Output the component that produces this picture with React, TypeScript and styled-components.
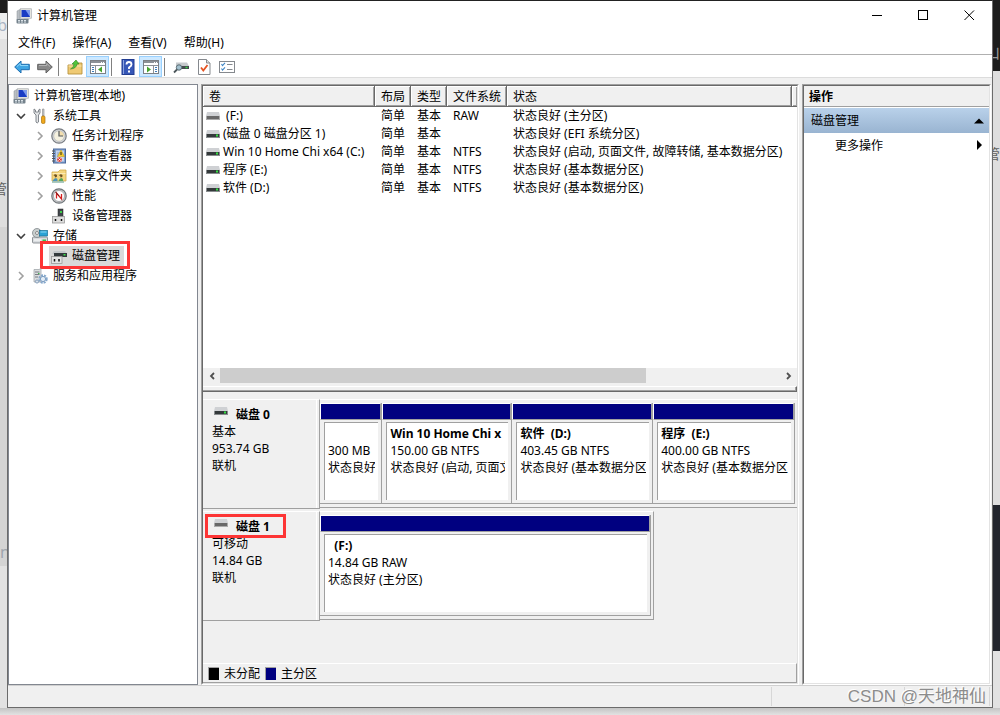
import React from "react";
import styled, { createGlobalStyle, css } from "styled-components";

const face = "#f0f0f0";
const shade = "#a0a0a0";
const dark = "#696969";
const navy = "#000080";

const GlobalStyle = createGlobalStyle`
  * { box-sizing: border-box; }
  body {
    margin: 0;
    background: #e2e2e2;
    color: #000;
    font-family: "Noto Sans", "Noto Sans CJK SC", sans-serif;
    font-size: 12px;
    line-height: 17px;
  }
  button {
    font: inherit;
    color: inherit;
    background: none;
    border: 0;
    padding: 0;
    cursor: default;
  }
  svg { display: block; flex: none; }
`;

/* ---------- desktop around the window ---------- */

const Desktop = styled.div`
  min-height: 100vh;
  display: flex;
  flex-direction: column;
`;

const DesktopRow = styled.div`
  flex: 1;
  display: flex;
`;

const Gutter = styled.div`
  flex: 0 0 7px;
  overflow: hidden;
`;

const Backdrop = styled.div<{ $h: number; $bg: string; $ink?: string; $top?: number; $end?: boolean; $size?: number }>`
  width: 7px;
  height: ${(p) => p.$h}px;
  padding-top: ${(p) => p.$top ?? 0}px;
  background: ${(p) => p.$bg};
  color: ${(p) => p.$ink ?? "#555"};
  font-size: ${(p) => p.$size ?? 16}px;
  display: flex;
  justify-content: ${(p) => (p.$end ? "flex-end" : "flex-start")};
  overflow: hidden;
  white-space: nowrap;
`;

const BottomEdge = styled.div`
  height: 7px;
  background: linear-gradient(#c4c4c4, #e2e2e2);
`;

/* ---------- window frame ---------- */

const Window = styled.main`
  position: relative;
  flex: 1;
  min-width: 0;
  display: flex;
  flex-direction: column;
  background: ${face};
  border: 1px solid #6b6b6b;
  border-top-color: #222;
`;

const TitleBar = styled.header`
  height: 29px;
  display: flex;
  align-items: center;
  padding-left: 8px;
  background: #fff;
`;

const Title = styled.h1`
  flex: 1;
  margin: 0;
  padding-left: 5px;
  font-size: 12px;
  font-weight: 400;
`;

const CaptionButton = styled.button`
  width: 46px;
  height: 29px;
  display: flex;
  align-items: center;
  justify-content: center;
`;

const MenuBar = styled.nav`
  height: 25px;
  display: flex;
  align-items: center;
  gap: 1px;
  padding-left: 2px;
  background: #fff;
  border-bottom: 1px solid #b0b0b0;
`;

const MenuItem = styled.button`
  height: 24px;
  padding: 0 8px;
`;

const Toolbar = styled.div`
  height: 23px;
  display: flex;
  align-items: flex-end;
  padding-left: 2px;
  background: #fff;
  border-bottom: 1px solid #dcdcdc;
`;

const ToolButton = styled.button<{ $on?: boolean }>`
  width: 23px;
  height: 21px;
  display: flex;
  align-items: center;
  justify-content: center;
  padding-top: 1px;
  border: 1px solid transparent;
  ${(p) => p.$on && css`
    background: #cce8ff;
    border-color: #99d1ff;
  `}
`;

const ToolDivider = styled.span`
  width: 1px;
  height: 18px;
  margin: 0 4px 1px 2px;
  background: #808080;
`;

const Panes = styled.div`
  flex: 1;
  display: flex;
  gap: 3px;
  padding: 6px 1px 0 0;
`;

/* ---------- sunken panes ---------- */

const SunkenOuter = styled.section<{ $w?: number }>`
  flex: ${(p) => (p.$w ? `0 0 ${p.$w}px` : "1")};
  min-width: 0;
  display: flex;
  border: 1px solid ${shade};
  border-right-color: #fff;
  border-bottom-color: #fff;
`;

const SunkenInner = styled.div`
  flex: 1;
  min-width: 0;
  display: flex;
  flex-direction: column;
  border: 1px solid ${dark};
  border-right-color: #e3e3e3;
  border-bottom-color: #e3e3e3;
`;

/* ---------- console tree ---------- */

const TreePane = styled.nav`
  flex: 0 0 190px;
  padding-top: 1px;
  background: #fff;
  border: 1px solid #828790;
`;

const TreeList = styled.ul`
  margin: 0;
  padding: 0;
  list-style: none;
`;

const TreeRow = styled.li<{ $level: number }>`
  height: 20px;
  display: flex;
  padding-left: ${(p) => 2 + 19 * Math.max(0, p.$level - 1)}px;
`;

const Expander = styled.span`
  width: 19px;
  display: flex;
  align-items: center;
  justify-content: center;
`;

const TreeItem = styled.button<{ $selected?: boolean }>`
  position: relative;
  display: flex;
  align-items: center;
  gap: 5px;
  padding: 0 4px 0 2px;
  background: ${(p) => (p.$selected ? "#d9d9d9" : "transparent")};
`;

const TreeText = styled.span`
  padding-bottom: 2px;
`;

const Marker = styled.span<{ $inset: string }>`
  position: absolute;
  inset: ${(p) => p.$inset};
  border: 3px solid #fd3535;
  pointer-events: none;
`;

/* ---------- volume list ---------- */

const ListArea = styled.div`
  flex: 1 1 282px;
  overflow: hidden;
  background: #fff;
`;

const VolumeTable = styled.table`
  width: 100%;
  table-layout: fixed;
  border-collapse: separate;
  border-spacing: 0;
`;

const HeadCell = styled.th`
  height: 21px;
  padding: 0 0 0 6px;
  text-align: left;
  font-weight: 400;
  white-space: nowrap;
  overflow: hidden;
  background: ${face};
  border-right: 1px solid ${dark};
  border-bottom: 1px solid ${dark};
  box-shadow: inset 1px 1px #fff, inset -1px -1px ${shade};
  &:last-child { border-right: 0; padding: 0; }
`;

const Cell = styled.td`
  height: 18px;
  padding: 0 0 0 6px;
  line-height: 18px;
  vertical-align: top;
  white-space: nowrap;
  overflow: hidden;
`;

const VolumeName = styled.div`
  display: flex;
  align-items: center;
  gap: 3px;
  margin-left: -3px;
  white-space: pre;
`;

const ScrollBar = styled.div`
  height: 15px;
  display: flex;
  background: ${face};
`;

const ScrollButton = styled.button`
  width: 17px;
  display: flex;
  align-items: center;
  justify-content: center;
`;

const ScrollTrack = styled.div`
  flex: 1;
`;

const ScrollThumb = styled.div`
  width: 76%;
  height: 15px;
  background: #cdcdcd;
`;

const Splitter = styled.div`
  height: 6px;
  margin-top: 3px;
  background: ${face};
  border: 1px solid ${dark};
  border-top-color: #fff;
  border-left: 0;
  box-shadow: inset -1px -1px ${shade};
`;

/* ---------- disk map ---------- */

const DiskMap = styled.div`
  flex: 1 1 271px;
  display: flex;
  flex-direction: column;
  gap: 2px;
  padding-top: 7px;
`;

const DiskRow = styled.article`
  height: 110px;
  display: flex;
`;

const DiskLabel = styled.div`
  flex: 0 0 117px;
  padding: 6px 0 0 9px;
  border-top: 1px solid #fff;
  border-right: 1px solid ${shade};
  border-bottom: 1px solid ${shade};
  box-shadow: inset -2px 0 ${face}, inset -3px 0 #fff;
`;

const DiskTitle = styled.h2`
  position: relative;
  margin: 0;
  display: flex;
  gap: 8px;
  padding-left: 2px;
  font-size: 12px;
  line-height: 17px;
  font-weight: 700;
  svg { margin-top: 1px; }
`;

const Line = styled.div`
  height: 17px;
  white-space: pre;
  overflow: hidden;
`;

const BoldLine = styled(Line)`
  font-weight: 700;
`;

const Partitions = styled.div<{ $share: number; $closed?: boolean }>`
  width: ${(p) => p.$share}%;
  height: 109px;
  display: flex;
  padding: 3px 2px 3px 0;
  border-top: 1px solid #fff;
  border-bottom: 1px solid ${shade};
  border-right: ${(p) => (p.$closed ? `1px solid ${shade}` : "0")};
`;

const DiskGraph = styled.div`
  flex: 1;
  min-width: 0;
`;

const Partition = styled.div<{ $grow: number }>`
  flex: ${(p) => p.$grow} 1 0;
  min-width: 0;
  display: flex;
  flex-direction: column;
  border-right: 1px solid ${shade};
  border-bottom: 1px solid ${shade};
`;

const PartitionBar = styled.div`
  height: 17px;
  background: ${navy};
  border: 1px solid #fff;
  border-right-color: ${shade};
  border-bottom-color: ${shade};
`;

const PartitionBody = styled.div`
  flex: 1;
  margin: 2px 3px 3px 4px;
  padding: 2px 3px 0 3px;
  background: #fff;
  border-top: 1px solid ${shade};
  border-left: 1px solid ${shade};
  overflow: hidden;
`;

const Legend = styled.div`
  height: 20px;
  display: flex;
  align-items: center;
  gap: 5px;
  padding-left: 5px;
  border-top: 1px solid #fff;
  border-right: 1px solid ${shade};
  border-bottom: 1px solid ${shade};
`;

const Swatch = styled.span<{ $color: string }>`
  width: 11px;
  height: 13px;
  background: ${(p) => p.$color};
  border-top: 1px solid ${shade};
  border-left: 1px solid ${shade};
`;

/* ---------- actions pane ---------- */

const ActionsHeading = styled.h2`
  height: 21px;
  margin: 0;
  padding-left: 5px;
  font-size: 12px;
  line-height: 21px;
  font-weight: 700;
  background: ${face};
  border-bottom: 1px solid ${shade};
`;

const ActionsBody = styled.div`
  flex: 1;
  padding-top: 1px;
  background: #fff;
`;

const ActionRow = styled.button<{ $group?: boolean }>`
  width: 100%;
  height: ${(p) => (p.$group ? 25 : 24)}px;
  display: flex;
  align-items: center;
  justify-content: space-between;
  padding: 0 5px 0 ${(p) => (p.$group ? 7 : 31)}px;
  background: ${(p) => (p.$group ? "linear-gradient(#b9d1ea, #99b4d1)" : "none")};
`;

/* ---------- status bar ---------- */

const StatusBar = styled.footer`
  height: 22px;
  display: flex;
  justify-content: flex-end;
  padding: 1px 2px 1px 0;
  border-top: 1px solid #d0d0d0;
`;

const StatusCell = styled.div<{ $w: number }>`
  width: ${(p) => p.$w}px;
  border-right: 1px solid #d7d7d7;
`;

const Watermark = styled.div`
  position: absolute;
  right: 6px;
  bottom: 0;
  font-family: "Liberation Sans", "Noto Sans CJK SC", sans-serif;
  font-size: 17px;
  line-height: 20px;
  color: #8c8c8c;
  text-shadow: -1px -1px #fff;
  white-space: nowrap;
`;

/* ---------- icons ---------- */

const Svg = ({ children, w = 16, h = 16 }: { children: React.ReactNode; w?: number; h?: number }) => (
  <svg width={w} height={h} viewBox={`0 0 ${w} ${h}`} aria-hidden="true">{children}</svg>
);

const ComputerIcon = () => (
  <Svg>
    <path d="M1 3 L4 1.500 V12 H1 Z" fill="#b9bec4" stroke="#8b9096" strokeWidth=".5" />
    <rect x="4.300" y=".8" width="11" height="9.400" fill="#e8e8e2" stroke="#a3a7ab" strokeWidth=".7" />
    <rect x="5.500" y="2" width="8.500" height="7" fill="#1a3cc4" />
    <path d="M9.500 2 H14 V9 Z" fill="#7d9aec" />
    <path d="M8 10.200 H12.500 L13.500 12 H7 Z" fill="#b6babd" />
    <rect x=".5" y="11" width="12" height="4.500" rx="1" fill="#74828c" />
    <path d="M2 12.500 H11 M2 14 H11" stroke="#dbe3e8" strokeDasharray="2 1" />
  </Svg>
);

const ToolsIcon = () => (
  <Svg>
    <path d="M2 1 L2 5 L4 7 V14 Q5 16 6.500 14 V7 L8 5 V1 L6.500 2 V4 H3.500 V2 Z" fill="#e2e4e6" stroke="#777d83" strokeWidth=".9" />
    <path d="M10.500 1 H12 V8 H10.500 Z" fill="#c9ccd0" stroke="#888" strokeWidth=".6" />
    <rect x="9.500" y="8" width="3.500" height="7.500" rx="1.300" fill="#f0a81d" stroke="#a87410" strokeWidth=".7" />
  </Svg>
);

const ClockIcon = () => (
  <Svg>
    <circle cx="8" cy="8" r="7.200" fill="#d4d7da" stroke="#777b80" strokeWidth="1.200" />
    <circle cx="8" cy="8" r="5.300" fill="#f5f1df" stroke="#b4b6b8" strokeWidth=".7" />
    <path d="M8 8 V3 A5 5 0 0 1 13 8 Z" fill="#f2d79a" opacity=".7" />
    <path d="M8 3 V8 H12" fill="none" stroke="#50565c" strokeWidth="1.200" />
  </Svg>
);

const EventIcon = () => (
  <Svg>
    <rect x="2.500" y="1" width="12" height="14" fill="#7f9fd0" stroke="#4c6a9c" />
    <rect x="5" y="2.500" width="8" height="11" fill="#c3d3ec" />
    <path d="M6 5 H9 M6 7 H8 M6 9 H7" stroke="#6d88b4" strokeWidth=".7" />
    <path d="M1 3 H4 M1 5.500 H4 M1 8 H4 M1 10.500 H4 M1 13 H4" stroke="#555" />
    <path d="M10 2 L13.500 8.500 H6.500 Z" fill="#f6cb29" stroke="#c09a10" strokeWidth=".5" />
    <path d="M10 4 V7" stroke="#222" />
    <circle cx="8.500" cy="11.500" r="2.600" fill="#d8342c" stroke="#fff" strokeWidth=".5" />
    <path d="M7.300 10.300 L9.700 12.700 M9.700 10.300 L7.300 12.700" stroke="#fff" strokeWidth=".8" />
  </Svg>
);

const SharedFolderIcon = () => (
  <Svg>
    <path d="M1 4 H7 L9 2 H15 V13 H1 Z" fill="#f5d57e" stroke="#cfa94a" strokeWidth=".8" />
    <path d="M1.500 5.500 H14.500" stroke="#fbeab4" />
    <path d="M2.500 7.500 Q4 5.500 6 7 Q6.500 9 4.500 9.500 Q3 9 4 8" fill="#6c5124" />
    <path d="M1.500 13 Q3 10 5 10 Q7 10.500 6.500 13 Z" fill="#4d93b8" />
    <path d="M8 7.500 Q9.500 5.500 11.500 7 Q12 9 10 9.500 Q8.500 9 9.500 8" fill="#6c5124" />
    <path d="M7.500 13 Q8.500 10 10.500 10 Q12.500 10.500 12 13 Z" fill="#57a55d" />
    <path d="M1 14 H13" stroke="#8fb9ac" strokeWidth="1.500" />
  </Svg>
);

const PerformanceIcon = () => (
  <Svg>
    <circle cx="8" cy="8" r="7.200" fill="#c9ccce" stroke="#6f7478" strokeWidth="1.200" />
    <circle cx="8" cy="8" r="5.500" fill="#fff" stroke="#8b8f92" strokeWidth=".7" />
    <path d="M5.500 10.500 V5 L10.500 11 V6" fill="none" stroke="#d42020" strokeWidth="1.300" />
    <path d="M4.500 4 L8 8" stroke="#701818" />
  </Svg>
);

const DeviceIcon = () => (
  <Svg>
    <rect x="7" y="1" width="5" height="9" fill="#42474b" stroke="#222" strokeWidth=".5" />
    <rect x="9" y="3" width="2" height="2" fill="#3fd34a" />
    <rect x="1.500" y="8.500" width="12" height="6.500" fill="#dedede" stroke="#999" strokeWidth=".8" />
    <path d="M4.500 11 V13 M10.500 11 V13" stroke="#111" strokeWidth="1.500" />
  </Svg>
);

const StorageIcon = () => (
  <Svg>
    <rect x=".5" y="9" width="15" height="6" rx="1" fill="#d9dcdf" stroke="#777c81" strokeWidth=".8" />
    <circle cx="5" cy="5" r="4.500" fill="#c9cfcf" stroke="#80888c" strokeWidth=".8" />
    <circle cx="5" cy="5" r="1.500" fill="#fff" stroke="#888" />
    <rect x="7.500" y="2.500" width="8" height="5.500" fill="#2ba3d5" stroke="#176f95" strokeWidth=".7" />
    <path d="M8.500 4 H14.500" stroke="#8ed9f5" />
    <rect x="10.500" y="11.500" width="3.500" height="2" fill="#39c04a" />
    <path d="M2 12 H9" stroke="#fff" />
  </Svg>
);

const DiskMgmtIcon = () => (
  <Svg>
    <path d="M3 3 H14 L16 6 H1 Z" fill="#c3c7ca" />
    <rect x="3" y="5" width="13" height="4" fill="#343a3d" />
    <rect x="12.500" y="6" width="2" height="1.500" fill="#3be04b" />
    <rect x=".5" y="8.500" width="10.500" height="7" fill="#e4e4e4" stroke="#999" strokeWidth=".8" />
    <path d="M3.500 11 V13.500 M8 11 V13.500" stroke="#111" strokeWidth="1.500" />
  </Svg>
);

const ServicesIcon = () => (
  <Svg>
    <path d="M2 1.500 H7 L9 .5 V14 H2 Z" fill="#dadddf" stroke="#9a9fa4" strokeWidth=".7" />
    <path d="M3 4 H7.500 M3 6.500 H7.500 M3 9 H6" stroke="#60666b" strokeWidth=".8" />
    <rect x="6" y="5" width="1.500" height="1" fill="#42b653" />
    <circle cx="11" cy="11" r="3.700" fill="none" stroke="#86a8cc" strokeWidth="2" strokeDasharray="2 1" />
    <circle cx="11" cy="11" r="2.600" fill="#e3edf7" stroke="#7b9cc0" />
    <circle cx="5" cy="13.500" r="1.600" fill="#d7e0ea" stroke="#7390b0" strokeWidth=".8" />
  </Svg>
);

const Arrow = ({ back }: { back?: boolean }) => (
  <Svg>
    <g transform={back ? undefined : "matrix(-1 0 0 1 16 0)"}>
      <path
        d="M.7 8 L7 2 V5.300 H15.300 V10.700 H7 V14 Z"
        fill={back ? "#3fa5e3" : "#888"}
        stroke={back ? "#1d6db0" : "#606060"}
        strokeLinejoin="round"
      />
      <path d="M3 7.500 L6.300 4.500 V6.500 H14" fill="none" stroke={back ? "#8cd6fa" : "#b3b3b3"} />
    </g>
  </Svg>
);

const FolderUpIcon = () => (
  <Svg>
    <path d="M1 6 H7 L8.500 4 H15 V15 H1 Z" fill="#efca74" stroke="#b8923c" strokeWidth=".9" />
    <path d="M1.500 7 H14.500" stroke="#f9e5ad" />
    <path d="M3.500 10 Q7 8.500 7 5 H5 L9 1 L12 5 H10 Q9.500 9.500 3.500 10 Z" fill="#52c43c" stroke="#2b8421" strokeWidth=".6" />
  </Svg>
);

const PaneIcon = ({ right }: { right?: boolean }) => (
  <Svg>
    <rect x=".5" y="1.500" width="15" height="13" fill="#fff" stroke="#7c8085" />
    <path d="M1 3 H15" stroke="#8c9197" strokeWidth="2" />
    <path d="M11 3.500 H12 M13 3.500 H14" stroke="#fff" />
    <path d="M1 6.500 H15" stroke="#8c9197" />
    {right ? (
      <>
        <path d="M10.500 7 V14" stroke="#8c9197" />
        <path d="M12 8.500 H14 M12 10.500 H14 M12 12.500 H14" stroke="#3e7dbb" />
        <path d="M4 7.500 V13.500 L8 10.500 Z" fill="#45a42c" />
      </>
    ) : (
      <>
        <path d="M5.500 7 V14" stroke="#8c9197" />
        <path d="M2 8.500 H4 M2 10.500 H4 M2 12.500 H4" stroke="#3e7dbb" />
        <path d="M12 7.500 V13.500 L8 10.500 Z" fill="#45a42c" />
      </>
    )}
  </Svg>
);

const HelpIcon = () => (
  <Svg>
    <rect x="2" y=".5" width="12" height="15" fill="#3657b7" stroke="#223d91" />
    <path d="M3.500 1 V15" stroke="#8da4df" />
    <path d="M6.500 5.500 Q6.500 3 9 3 T11.500 5.500 Q11.500 7 9 8.500 V10" fill="none" stroke="#fff" strokeWidth="1.800" />
    <rect x="8" y="11.500" width="2" height="2" fill="#fff" />
  </Svg>
);

const ConsoleIcon = () => (
  <Svg>
    <path d="M3 3.500 H14 L16 7 H3 Z" fill="#c6cacd" />
    <rect x="5" y="7" width="11" height="3" fill="#454b4e" />
    <rect x="12.500" y="7.800" width="2" height="1.400" fill="#39d54a" />
    <circle cx="6" cy="8.500" r="2.700" fill="#a3c1cf" stroke="#596b73" />
    <path d="M4 10.500 L1 13.500" stroke="#4b565a" strokeWidth="1.800" />
  </Svg>
);

const CheckPageIcon = () => (
  <Svg>
    <path d="M2.500 .5 H10.500 L14 4 V15.500 H2.500 Z" fill="#fff" stroke="#85898e" />
    <path d="M10.500 .5 V4 H14" fill="#ddd" stroke="#85898e" />
    <path d="M5 8.500 L7.300 11.500 L11.500 6" fill="none" stroke="#e55322" strokeWidth="1.800" />
  </Svg>
);

const CheckListIcon = () => (
  <Svg>
    <rect x=".5" y="2.500" width="15" height="11" fill="#fff" stroke="#85898e" />
    <path d="M2.500 5 L3.500 6.500 L6 3.800 M2.500 9.500 L3.500 11 L6 8.300" fill="none" stroke="#3e86c6" strokeWidth="1.100" />
    <path d="M8 5.500 H13.500 M8 10.500 H13.500" stroke="#85898e" />
  </Svg>
);

const DriveIcon = ({ removable }: { removable?: boolean }) => (
  <Svg w={14} h={8}>
    <path d="M1 0 H13 L14 4 H0 Z" fill="#cfd1d4" />
    <rect y="4" width="14" height="4" fill={removable ? "#aaa" : "#888c8e"} />
    <rect x="1" y="4" width="12" height="3" fill={removable ? "#686868" : "#34393b"} />
    {!removable && <rect x="10" y="4.500" width="2" height="2" fill="#35e043" />}
  </Svg>
);

const Chevron = ({ open }: { open?: boolean }) => (
  <Svg w={10} h={10}>
    <path
      d={open ? "M1 3 L5 7 L9 3" : "M3 1 L7 5 L3 9"}
      fill="none"
      stroke={open ? "#404040" : "#a0a0a0"}
      strokeWidth="1.600"
    />
  </Svg>
);

/* ---------- data ---------- */

type Node = { text: string; level: number; icon: React.ReactNode; open?: boolean; selected?: boolean };

const tree: Node[] = [
  { text: "计算机管理(本地)", level: 0, icon: <ComputerIcon /> },
  { text: "系统工具", level: 1, icon: <ToolsIcon />, open: true },
  { text: "任务计划程序", level: 2, icon: <ClockIcon />, open: false },
  { text: "事件查看器", level: 2, icon: <EventIcon />, open: false },
  { text: "共享文件夹", level: 2, icon: <SharedFolderIcon />, open: false },
  { text: "性能", level: 2, icon: <PerformanceIcon />, open: false },
  { text: "设备管理器", level: 2, icon: <DeviceIcon /> },
  { text: "存储", level: 1, icon: <StorageIcon />, open: true },
  { text: "磁盘管理", level: 2, icon: <DiskMgmtIcon />, selected: true },
  { text: "服务和应用程序", level: 1, icon: <ServicesIcon />, open: false },
];

const volumes = [
  [" (F:)", "RAW", "状态良好 (主分区)"],
  ["(磁盘 0 磁盘分区 1)", "", "状态良好 (EFI 系统分区)"],
  ["Win 10 Home Chi x64 (C:)", "NTFS", "状态良好 (启动, 页面文件, 故障转储, 基本数据分区)"],
  ["程序 (E:)", "NTFS", "状态良好 (基本数据分区)"],
  ["软件 (D:)", "NTFS", "状态良好 (基本数据分区)"],
];

const disks = [
  {
    name: "磁盘 0",
    info: ["基本", "953.74 GB", "联机"],
    share: 100,
    parts: [
      { grow: 62, name: "", size: "300 MB", state: "状态良好" },
      { grow: 130, name: "Win 10 Home Chi x", size: "150.00 GB NTFS", state: "状态良好 (启动, 页面文" },
      { grow: 141, name: "软件  (D:)", size: "403.45 GB NTFS", state: "状态良好 (基本数据分区" },
      { grow: 142, name: "程序  (E:)", size: "400.00 GB NTFS", state: "状态良好 (基本数据分区" },
    ],
  },
  {
    name: "磁盘 1",
    info: ["可移动", "14.84 GB", "联机"],
    share: 70,
    removable: true,
    parts: [{ grow: 1, name: "  (F:)", size: "14.84 GB RAW", state: "状态良好 (主分区)" }],
  },
];

export default function App() {
  return (
    <Desktop>
      <GlobalStyle />
      <DesktopRow>
        <Gutter aria-hidden="true">
          <Backdrop $h={13} $bg="#1c1c1c" />
          <Backdrop $h={26} $bg="#eeeeee" $ink="#a9b4c4" $top={4} $end>b</Backdrop>
          <Backdrop $h={141} $bg="#e2e2e2" />
          <Backdrop $h={47} $bg="#dedede" $ink="#606060" $size={14} $end>管</Backdrop>
          <Backdrop $h={317} $bg="#d4d4d4" />
          <Backdrop $h={22} $bg="#d4d4d4" $ink="#9fa6ae">n</Backdrop>
        </Gutter>
        <Window>
          <TitleBar>
            <ComputerIcon />
            <Title>计算机管理</Title>
            <CaptionButton aria-label="最小化">
              <Svg w={11} h={11}><path d="M0 5.500 H10" stroke="#000" /></Svg>
            </CaptionButton>
            <CaptionButton aria-label="最大化">
              <Svg w={11} h={11}><rect x=".5" y=".5" width="9" height="9" fill="none" stroke="#000" /></Svg>
            </CaptionButton>
            <CaptionButton aria-label="关闭">
              <Svg w={11} h={11}><path d="M.5 .5 L10 10 M10 .5 L.5 10" stroke="#000" /></Svg>
            </CaptionButton>
          </TitleBar>

          <MenuBar>
            <MenuItem>文件(F)</MenuItem>
            <MenuItem>操作(A)</MenuItem>
            <MenuItem>查看(V)</MenuItem>
            <MenuItem>帮助(H)</MenuItem>
          </MenuBar>

          <Toolbar role="toolbar">
            <ToolButton aria-label="后退"><Arrow back /></ToolButton>
            <ToolButton aria-label="前进"><Arrow /></ToolButton>
            <ToolDivider />
            <ToolButton aria-label="上一级"><FolderUpIcon /></ToolButton>
            <ToolButton aria-label="显示控制台树" $on><PaneIcon /></ToolButton>
            <ToolDivider />
            <ToolButton aria-label="帮助"><HelpIcon /></ToolButton>
            <ToolButton aria-label="显示操作窗格" $on><PaneIcon right /></ToolButton>
            <ToolDivider />
            <ToolButton aria-label="连接"><ConsoleIcon /></ToolButton>
            <ToolButton aria-label="刷新"><CheckPageIcon /></ToolButton>
            <ToolButton aria-label="属性"><CheckListIcon /></ToolButton>
          </Toolbar>

          <Panes>
            <TreePane>
              <TreeList>
                {tree.map((n) => (
                  <TreeRow key={n.text} $level={n.level}>
                    {n.level > 0 && <Expander>{n.open !== undefined && <Chevron open={n.open} />}</Expander>}
                    <TreeItem $selected={n.selected}>
                      {n.icon}
                      <TreeText>{n.text}</TreeText>
                      {n.selected && <Marker $inset="-5px -6px -3px -9px" />}
                    </TreeItem>
                  </TreeRow>
                ))}
              </TreeList>
            </TreePane>

            <SunkenOuter>
              <SunkenInner>
                <ListArea>
                  <VolumeTable>
                    <colgroup>
                      <col width={172} />
                      <col width={36} />
                      <col width={36} />
                      <col width={60} />
                      <col width={285} />
                      <col />
                    </colgroup>
                    <thead>
                      <tr>
                        {["卷", "布局", "类型", "文件系统", "状态", ""].map((h) => (
                          <HeadCell key={h}>{h}</HeadCell>
                        ))}
                      </tr>
                    </thead>
                    <tbody>
                      {volumes.map(([name, fs, state], i) => (
                        <tr key={name}>
                          <Cell><VolumeName><DriveIcon removable={i === 0} />{name}</VolumeName></Cell>
                          <Cell>简单</Cell>
                          <Cell>基本</Cell>
                          <Cell>{fs}</Cell>
                          <Cell>{state}</Cell>
                        </tr>
                      ))}
                    </tbody>
                  </VolumeTable>
                </ListArea>
                <ScrollBar>
                  <ScrollButton aria-label="向左滚动">
                    <Svg w={8} h={8}><path d="M6 1 L3 4 L6 7" fill="none" stroke="#505050" strokeWidth="1.800" /></Svg>
                  </ScrollButton>
                  <ScrollTrack><ScrollThumb /></ScrollTrack>
                  <ScrollButton aria-label="向右滚动">
                    <Svg w={8} h={8}><path d="M2 1 L5 4 L2 7" fill="none" stroke="#505050" strokeWidth="1.800" /></Svg>
                  </ScrollButton>
                </ScrollBar>
                <Splitter />

                <DiskMap>
                  {disks.map((d) => (
                    <DiskRow key={d.name}>
                      <DiskLabel>
                        <DiskTitle>
                          <DriveIcon removable={d.removable} />
                          {d.name}
                          {d.removable && <Marker $inset="-4px 33px -3px -7px" />}
                        </DiskTitle>
                        {d.info.map((t) => <Line key={t}>{t}</Line>)}
                      </DiskLabel>
                      <DiskGraph>
                        <Partitions $share={d.share} $closed={d.removable}>
                          {d.parts.map((p) => (
                            <Partition key={p.size} $grow={p.grow}>
                              <PartitionBar />
                              <PartitionBody>
                                <BoldLine>{p.name}</BoldLine>
                                <Line>{p.size}</Line>
                                <Line>{p.state}</Line>
                              </PartitionBody>
                            </Partition>
                          ))}
                        </Partitions>
                      </DiskGraph>
                    </DiskRow>
                  ))}
                </DiskMap>

                <Legend>
                  <Swatch $color="#000" />未分配
                  <Swatch $color={navy} />主分区
                </Legend>
              </SunkenInner>
            </SunkenOuter>

            <SunkenOuter $w={189} as="aside">
              <SunkenInner>
                <ActionsHeading>操作</ActionsHeading>
                <ActionsBody>
                  <ActionRow $group>
                    磁盘管理
                    <Svg w={10} h={6}><path d="M0 5.500 L5 .5 L10 5.500 Z" fill="#000" /></Svg>
                  </ActionRow>
                  <ActionRow>
                    更多操作
                    <Svg w={8} h={10}><path d="M1 0 L6 5 L1 10 Z" fill="#000" /></Svg>
                  </ActionRow>
                </ActionsBody>
              </SunkenInner>
            </SunkenOuter>
          </Panes>

          <StatusBar>
            <StatusCell $w={133} />
            <StatusCell $w={133} />
            <StatusCell $w={85} />
          </StatusBar>
          <Watermark>CSDN @天地神仙</Watermark>
        </Window>
        <Gutter aria-hidden="true">
          <Backdrop $h={71} $bg="#1c1c1c" $ink="#999" $top={44} $end>山</Backdrop>
          <Backdrop $h={434} $bg="#dedede" $ink="#606060" $top={74} $size={14} $end>管</Backdrop>
          <Backdrop $h={146} $bg="#22252d" />
        </Gutter>
      </DesktopRow>
      <BottomEdge />
    </Desktop>
  );
}
